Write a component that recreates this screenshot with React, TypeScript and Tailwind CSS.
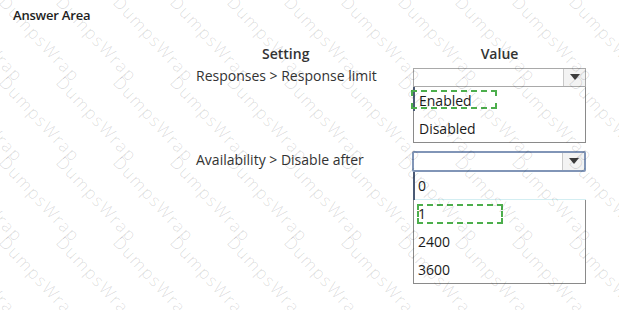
import React from "react";

const font = { fontFamily: '"Open Sans", "Noto Sans", sans-serif' };

function Arrow() {
    return (
        <div className="w-[22px] h-full flex items-center justify-center border-l border-[#c9c9c9] bg-[#f3f3f3]">
            <svg width="10" height="6" viewBox="0 0 10 6">
                <path d="M0 0 L10 0 L5 6 Z" fill="#3c3c3c" />
            </svg>
        </div>
    );
}

function Select({ focused }: { focused?: boolean }) {
    return (
        <div
            className={
                focused
                    ? "h-[21px] flex justify-end border-2 border-[#8195b7] rounded-[2px] bg-white"
                    : "h-[19px] flex justify-end border border-[#a9a9a9] bg-white"
            }
        >
            <Arrow />
        </div>
    );
}

function Watermarks() {
    const marks: { x: number; y: number }[] = [];
    for (let r = -1; r < 4; r++) {
        for (let c = -1; c < 12; c++) {
            marks.push({ x: 1 + c * 57, y: -7 + r * 80 });
        }
    }
    return (
        <div className="absolute inset-0 overflow-hidden pointer-events-none">
            {marks.map((m, i) => (
                <span
                    key={i}
                    className="absolute text-[17px] tracking-[1.5px] font-light text-black/[0.14] whitespace-nowrap origin-top-left rotate-[47deg] leading-none"
                    style={{ left: m.x + 8, top: m.y, ...font }}
                >
                    DumpsWrap
                </span>
            ))}
        </div>
    );
}

export default function App() {
    return (
        <div className="relative w-[619px] h-[310px] bg-white overflow-hidden text-[#222]" style={font}>
            <div className="pl-[13px] pt-[6px] text-[13px] font-semibold text-[#1e1e1e] tracking-[-0.2px]">Answer Area</div>

            <div className="flex pl-[196px] mt-[19px]">
                <div className="w-[217px]">
                    <div className="pl-[66px] text-[14px] font-semibold text-[#333] leading-[18px]">Setting</div>
                </div>
                <div className="w-[173px] text-center text-[14px] font-semibold text-[#333] leading-[18px]">Value</div>
            </div>

            {/* row 1 */}
            <div className="flex pl-[196px] mt-[4px]">
                <div className="w-[217px] text-[14px] leading-[18px] text-[#333]">Responses &gt; Response limit</div>
                <div className="w-[173px] mt-[1px]">
                    <Select />
                    <div className="relative h-[56px] border border-t-0 border-[#8a8a8a] text-[14px] text-[#1a1a1a]">
                        <div className="absolute left-[-1px] top-0 w-[2px] h-[24px] bg-[#4b5a75]" />
                        <div className="h-[28px] pl-[5px] flex items-center">Enabled</div>
                        <div className="h-[27px] pl-[5px] flex items-center">Disabled</div>
                        <div className="absolute left-[-3px] top-[3px] w-[86px] h-[19px] border-2 border-dashed border-[#4cae4c]" />
                    </div>
                </div>
            </div>

            {/* row 2 */}
            <div className="flex pl-[196px] mt-[8px]">
                <div className="w-[217px] text-[14px] leading-[18px] text-[#333]">Availability &gt; Disable after</div>
                <div className="w-[174px] -ml-[1px]">
                    <Select focused />
                    <div className="relative ml-[1px] w-[173px] text-[14px] text-[#1a1a1a]">
                        <div className="h-[28px] pl-[5px] flex items-center border-b border-[#d3eef2]">0</div>
                        <div className="absolute left-0 top-0 w-[2px] h-[28px] bg-[#4b5a75]" />
                        <div className="border border-t-0 border-[#8a8a8a]">
                            <div className="h-[28px] pl-[4px] flex items-center">1</div>
                            <div className="h-[28px] pl-[4px] flex items-center">2400</div>
                            <div className="h-[27px] pl-[4px] flex items-center">3600</div>
                        </div>
                        <div className="absolute left-[4px] top-[32px] w-[86px] h-[20px] border-2 border-dashed border-[#4cae4c]" />
                    </div>
                </div>
            </div>

            <Watermarks />
        </div>
    );
}
